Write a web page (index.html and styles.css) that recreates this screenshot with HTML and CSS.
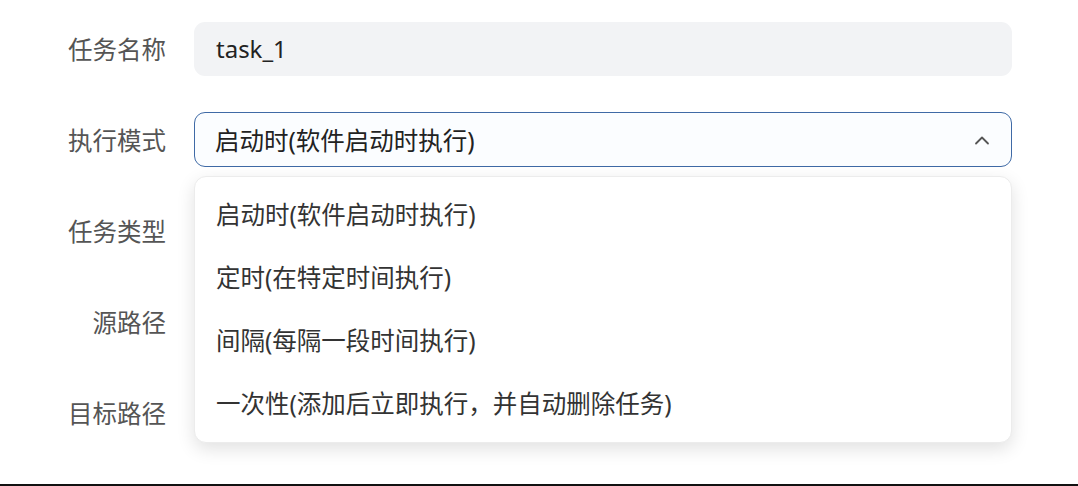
FILE: index.html
```html
<!DOCTYPE html>
<html lang="zh-CN">
<head>
    <meta charset="UTF-8">
    <meta name="viewport" content="width=device-width, initial-scale=1.0">
    <title>任务设置</title>
    <link rel="stylesheet" href="styles.css">
</head>
<body>
    <div class="page">
        <form class="task-form">
            <div class="form-row">
                <label class="form-label" for="taskName">任务名称</label>
                <input class="text-input" id="taskName" type="text" value="task_1">
            </div>
            <div class="form-row">
                <label class="form-label">执行模式</label>
                <div class="select-wrap">
                    <div class="select open">
                        <span class="select-value">启动时(软件启动时执行)</span>
                        <svg class="select-arrow" width="16" height="10" viewBox="0 0 16 10">
                            <path d="M2 8.5 L8 2.5 L14 8.5" fill="none" stroke="#555" stroke-width="1.8" stroke-linecap="round" stroke-linejoin="round"/>
                        </svg>
                    </div>
                    <ul class="dropdown">
                        <li class="dropdown-item">启动时(软件启动时执行)</li>
                        <li class="dropdown-item">定时(在特定时间执行)</li>
                        <li class="dropdown-item">间隔(每隔一段时间执行)</li>
                        <li class="dropdown-item">一次性(添加后立即执行，并自动删除任务)</li>
                    </ul>
                </div>
            </div>
            <div class="form-row">
                <label class="form-label">任务类型</label>
                <div class="text-input"></div>
            </div>
            <div class="form-row">
                <label class="form-label">源路径</label>
                <div class="text-input"></div>
            </div>
            <div class="form-row">
                <label class="form-label">目标路径</label>
                <div class="text-input"></div>
            </div>
        </form>
        <div class="bottom-rule"></div>
    </div>
</body>
</html>
```

FILE: styles.css
```css
* {
    box-sizing: border-box;
}
body {
    margin: 0;
    background: #fff;
    font-family: "Noto Sans", "Noto Sans CJK SC", sans-serif;
    color: #222;
}
.page {
    height: 486px;
    display: flex;
    flex-direction: column;
    overflow: hidden;
}
.task-form {
    flex: 1;
    display: flex;
    flex-direction: column;
    gap: 36px;
    padding: 21px 66px 0 46px;
}
.form-row {
    display: flex;
    align-items: center;
    gap: 28px;
    height: 55px;
}
.form-label {
    width: 120px;
    flex-shrink: 0;
    text-align: right;
    font-size: 24.5px;
    color: #555;
}
.text-input {
    flex: 1;
    height: 54px;
    border: none;
    border-radius: 11px;
    background: #f2f3f5;
    padding: 0 22px;
    font-family: inherit;
    font-size: 24px;
    color: #222;
    outline: none;
}
.select-wrap {
    flex: 1;
    position: relative;
    height: 55px;
}
.select {
    height: 55px;
    display: flex;
    align-items: center;
    justify-content: space-between;
    padding: 0 21px 0 20px;
    border: 1px solid #3f6aa6;
    border-radius: 11px;
    background: #fbfdff;
    font-size: 24.5px;
    color: #222;
}
.select-arrow {
    display: block;
}
.dropdown {
    position: absolute;
    top: 64px;
    left: 0;
    right: 0;
    z-index: 10;
    margin: 0;
    padding: 5px 0 8px;
    list-style: none;
    background: #fff;
    border: 1px solid #ececec;
    border-radius: 12px;
    box-shadow: 0 6px 18px rgba(0, 0, 0, 0.12);
}
.dropdown-item {
    height: 63px;
    display: flex;
    align-items: center;
    padding: 0 21px;
    font-size: 24.5px;
    color: #333;
}
.bottom-rule {
    height: 2px;
    background: #111;
}
```
